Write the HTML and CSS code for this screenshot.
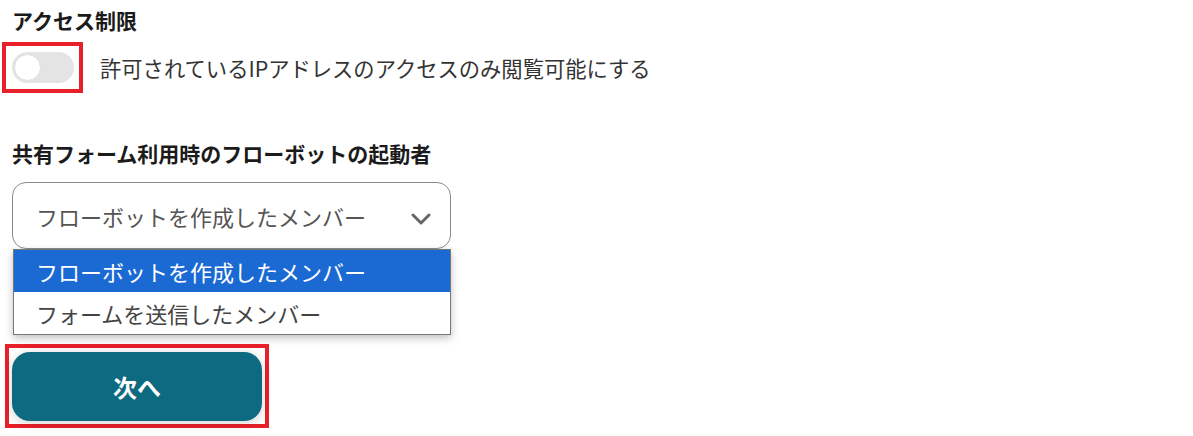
FILE: index.html
```html
<!DOCTYPE html>
<html lang="ja">
<head>
<meta charset="utf-8">
<link rel="stylesheet" href="styles.css">
</head>
<body>
<main class="page">
  <h2 class="title">アクセス制限</h2>
  <div class="toggle-row">
    <span class="hl hl-toggle"><span class="toggle"><span class="knob"></span></span></span>
    <span class="toggle-label">許可されているIPアドレスのアクセスのみ閲覧可能にする</span>
  </div>
  <h2 class="title title-2">共有フォーム利用時のフローボットの起動者</h2>
  <div class="select">
    <span class="select-value">フローボットを作成したメンバー</span>
    <svg class="chevron" width="20" height="12" viewBox="0 0 20 12"><polyline points="2,2 10,10 18,2" fill="none" stroke="#666" stroke-width="3" stroke-linecap="round" stroke-linejoin="round"/></svg>
  </div>
  <ul class="listbox">
    <li class="option selected">フローボットを作成したメンバー</li>
    <li class="option">フォームを送信したメンバー</li>
  </ul>
  <div class="hl hl-btn"><button class="next">次へ</button></div>
</main>
</body>
</html>
```
FILE: styles.css
```css
* { box-sizing: border-box; }
html, body { margin: 0; background: #fff; }
body {
  font-family: "Noto Sans CJK JP", "Noto Sans", sans-serif;
  color: #222;
}
.page {
  padding-left: 12px;
  width: 1193px;
  height: 436px;
  overflow: hidden;
}
.title {
  margin: 5px 0 0;
  font-size: 21px;
  line-height: 30px;
  font-weight: 700;
  color: #1b1b1b;
}
.title-2 { margin-top: 45px; }
.toggle-row {
  display: flex;
  align-items: center;
  margin-top: 7px;
  gap: 17px;
}
.hl { border: 4px solid #e8202a; }
.hl-toggle {
  display: block;
  margin-left: -10px;
  padding: 6px 5px 6px 6px;
}
.toggle {
  display: flex;
  align-items: center;
  width: 62px;
  height: 31px;
  border-radius: 16px;
  background: #e4e4e4;
  padding-left: 2px;
}
.knob {
  width: 27px;
  height: 27px;
  border-radius: 50%;
  background: #fff;
  border: 1px solid #ddd;
}
.toggle-label {
  font-size: 21.3px;
  line-height: 30px;
  color: #333;
}
.select {
  margin-top: 14px;
  width: 439px;
  height: 67px;
  border: 1px solid #8a8a8a;
  border-radius: 14px;
  display: flex;
  align-items: center;
  justify-content: space-between;
  padding: 0 19px 0 23px;
}
.select-value {
  font-size: 22px;
  color: #555;
}
.chevron { display: block; margin-top: 6px; }
.listbox {
  list-style: none;
  margin: 0 0 0 1px;
  padding: 0;
  width: 438px;
  border: 1px solid #777;
  box-shadow: 0 3px 8px rgba(0,0,0,0.25);
}
.option {
  height: 42px;
  display: flex;
  align-items: center;
  padding-left: 22px;
  font-size: 22px;
  color: #444;
  background: #fff;
}
.option.selected {
  background: #1b6ad4;
  color: #fff;
}
.hl-btn {
  margin-top: 9px;
  margin-left: -7px;
  width: 264px;
  padding: 4px 3px 3px 3px;
}
.next {
  display: block;
  width: 250px;
  height: 69px;
  border: none;
  border-radius: 18px;
  background: #0d6a80;
  color: #fff;
  font-family: "Noto Sans CJK JP", "Noto Sans", sans-serif;
  font-size: 24px;
  font-weight: 700;
  box-shadow: 0 2px 12px rgba(0,0,0,0.18);
}
```
